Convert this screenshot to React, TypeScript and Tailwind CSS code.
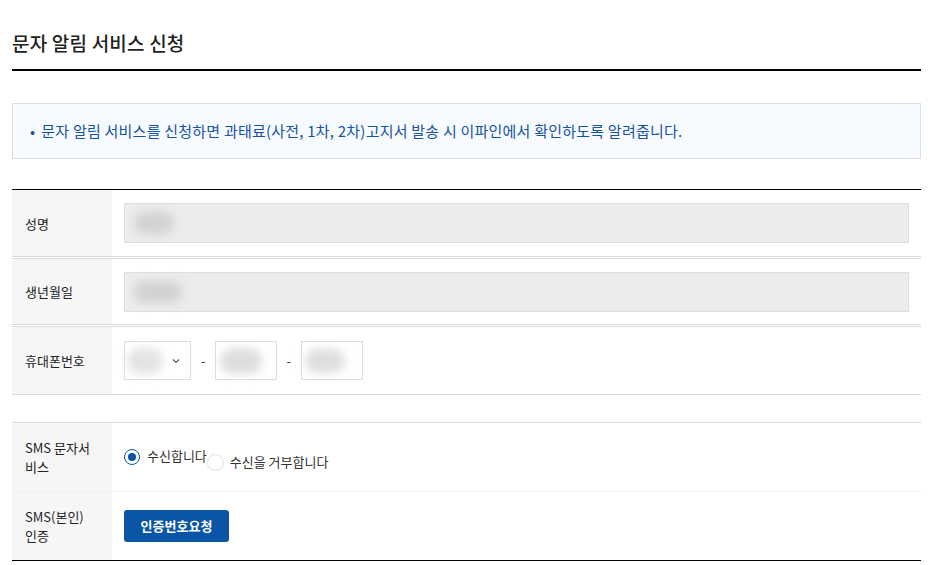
import React from "react";

const font = { fontFamily: '"Noto Sans CJK KR", "Noto Sans", sans-serif' };

function Blob({ w }: { w: string }) {
  return <span className={`block h-[22px] ${w} rounded-full bg-[#d2d2d2] blur-[5px]`} />;
}

function Label({ children, keep }: { children: React.ReactNode; keep?: boolean }) {
  return (
    <div
      className={`w-[100px] shrink-0 bg-[#f6f6f6] px-[13px] flex items-center text-[13px] leading-[19px] text-[#222] ${
        keep ? "break-keep" : ""
      }`}
    >
      {children}
    </div>
  );
}

export default function App() {
  return (
    <div className="min-h-[565px] bg-white text-[#222]" style={font}>
      <div className="ml-3 w-[909px]">
        <div className="pt-[29px] pb-[12px] border-b-2 border-black">
          <h1 className="text-[19px] leading-[28px] font-medium tracking-[0.2px] text-[#222]">문자 알림 서비스 신청</h1>
        </div>

        <div className="mt-[32px] h-[56px] border border-[#dde0e4] bg-[#f7faff] flex items-center pl-[17px] text-[15px] tracking-[0.22px] text-[#1553a3]">
          <span className="mr-[6px]">•</span>
          <span>문자 알림 서비스를 신청하면 과태료(사전, 1차, 2차)고지서 발송 시 이파인에서 확인하도록 알려줍니다.</span>
        </div>

        <div className="mt-[30px] border-t border-black">
          <div className="flex h-[67px] border-b border-[#d9d9d9]">
            <Label>성명</Label>
            <div className="flex-1 flex items-center pl-3 pr-3">
              <div className="h-[40px] w-full border border-[#dedede] bg-[#ececec] flex items-center pl-[9px]">
                <Blob w="w-[40px]" />
              </div>
            </div>
          </div>
          <div className="mt-px flex h-[67px] border-y border-[#d9d9d9]">
            <Label>생년월일</Label>
            <div className="flex-1 flex items-center pl-3 pr-3">
              <div className="h-[40px] w-full border border-[#dedede] bg-[#ececec] flex items-center pl-[9px]">
                <Blob w="w-[48px]" />
              </div>
            </div>
          </div>
          <div className="mt-px flex h-[69px] border-y border-[#d9d9d9]">
            <Label>휴대폰번호</Label>
            <div className="flex-1 flex items-center pl-3 text-[13px] text-[#333]">
              <div className="relative h-[39px] w-[67px] border border-[#dedede] bg-white flex items-center pl-[2px]">
                <span className="block h-[26px] w-[36px] rounded-full bg-[#e4e4e4] blur-[5px]" />
                <svg className="absolute right-[10px] top-[16px]" width="8" height="6" viewBox="0 0 8 6">
                  <path d="M1 1.5 L4 4.5 L7 1.5" fill="none" stroke="#555" strokeWidth="1.1" />
                </svg>
              </div>
              <span className="ml-[10px] mr-[9px]">-</span>
              <div className="h-[39px] w-[62px] border border-[#dedede] bg-white flex items-center pl-[4px]">
                <span className="block h-[26px] w-[42px] rounded-full bg-[#dedede] blur-[5px]" />
              </div>
              <span className="ml-[10px] mr-[10px]">-</span>
              <div className="h-[39px] w-[62px] border border-[#dedede] bg-white flex items-center pl-[3px]">
                <span className="block h-[24px] w-[40px] rounded-full bg-[#dedede] blur-[5px]" />
              </div>
            </div>
          </div>

          <div className="h-[27px]" />

          <div className="flex h-[70px] border-t border-b border-t-[#d9d9d9] border-b-[#f0f0f0]">
            <Label>SMS 문자서비스</Label>
            <div className="flex-1 flex items-center pl-3 text-[13px] text-[#333]">
              <label className="flex items-center">
                <span className="h-[16px] w-[16px] rounded-full border-[1.5px] border-[#0a55a5] flex items-center justify-center">
                  <span className="h-[8px] w-[8px] rounded-full bg-[#0a55a5]" />
                </span>
                <span className="ml-[7px] -mt-[3px]">수신합니다</span>
              </label>
              <label className="flex items-center mt-[10px]">
                <span className="h-[17px] w-[17px] rounded-full border border-[#e0e0e0] bg-white" />
                <span className="ml-[6px]">수신을 거부합니다</span>
              </label>
            </div>
          </div>
          <div className="flex h-[69px] border-b border-black">
            <Label keep>SMS(본인) 인증</Label>
            <div className="flex-1 flex items-center pl-3">
              <button className="h-[32px] w-[105px] rounded-[3px] bg-[#0a55a5] text-white text-[13px] font-bold">
                인증번호요청
              </button>
            </div>
          </div>
        </div>
      </div>
    </div>
  );
}
